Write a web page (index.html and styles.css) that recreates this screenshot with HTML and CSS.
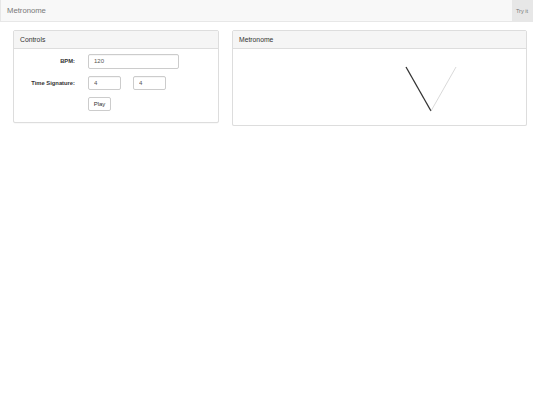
FILE: index.html
```html
<!DOCTYPE html>
<html>
<head>
<meta charset="utf-8">
<link rel="stylesheet" href="styles.css">
</head>
<body>
<nav class="navbar">
  <span class="brand">Metronome</span>
  <span class="try">Try it</span>
</nav>
<main class="container">
  <section class="panel controls">
    <div class="panel-heading">Controls</div>
    <div class="panel-body form">
      <label class="label">BPM:</label>
      <div class="field"><input class="input wide" type="text" value="120"></div>
      <label class="label">Time Signature:</label>
      <div class="field pair"><input class="input small" type="text" value="4"><input class="input small" type="text" value="4"></div>
      <span></span>
      <div class="field"><button class="btn">Play</button></div>
    </div>
  </section>
  <section class="panel metronome">
    <div class="panel-heading">Metronome</div>
    <div class="panel-body canvas">
      <svg width="293" height="77" viewBox="0 0 293 77">
        <line x1="173" y1="18" x2="198" y2="62" stroke="#333" stroke-width="1.3"/>
        <line x1="198" y1="62" x2="223" y2="18" stroke="#c8c8c8" stroke-width="0.7"/>
      </svg>
    </div>
  </section>
</main>
</body>
</html>
```

FILE: styles.css
```css
html, body {
  margin: 0;
  padding: 0;
  background: #fff;
  font-family: "Liberation Sans", Arial, sans-serif;
  color: #333;
}

.navbar {
  box-sizing: border-box;
  width: 533px;
  height: 22px;
  background: #f8f8f8;
  border: 1px solid #e7e7e7;
  border-top: 0;
  display: flex;
  justify-content: space-between;
  align-items: stretch;
}

.brand {
  padding-left: 6px;
  font-size: 7.7px;
  color: #777;
  display: flex;
  align-items: center;
}

.try {
  background: #e7e7e7;
  width: 20px;
  font-size: 5.6px;
  color: #777;
  display: flex;
  align-items: center;
  justify-content: center;
}

.container {
  display: flex;
  align-items: flex-start;
  gap: 13px;
  padding: 8px 13px 0 13px;
}

.panel {
  box-sizing: border-box;
  border: 1px solid #ddd;
  border-radius: 2px;
  background: #fff;
  box-shadow: 0 0.5px 0.5px rgba(0,0,0,0.05);
}

.controls { width: 206px; height: 93px; }
.metronome { width: 295px; height: 96px; }

.panel-heading {
  box-sizing: border-box;
  height: 18px;
  padding: 0 6px;
  background: #f5f5f5;
  border-bottom: 1px solid #ddd;
  font-size: 6.8px;
  color: #333;
  display: flex;
  align-items: center;
}

.form {
  display: grid;
  grid-template-columns: 61px 1fr;
  column-gap: 13px;
  row-gap: 7px;
  padding-top: 5px;
  align-items: center;
}

.label {
  text-align: right;
  font-weight: bold;
  font-size: 5.8px;
  color: #333;
}

.field { display: flex; }
.pair { gap: 12px; }

.input {
  box-sizing: border-box;
  height: 14.5px;
  border: 1px solid #ccc;
  border-radius: 2px;
  padding: 0 5px;
  font-family: "Liberation Sans", Arial, sans-serif;
  font-size: 6px;
  color: #555;
  background: #fff;
  box-shadow: inset 0 0.5px 0.5px rgba(0,0,0,0.075);
  outline: none;
}

.wide { width: 91px; }
.small { width: 33px; }

.btn {
  box-sizing: border-box;
  height: 14px;
  width: 23px;
  padding: 0;
  border: 1px solid #ccc;
  border-radius: 2px;
  background: #fff;
  font-family: "Liberation Sans", Arial, sans-serif;
  font-size: 6px;
  color: #333;
}

.canvas svg { display: block; }
```
